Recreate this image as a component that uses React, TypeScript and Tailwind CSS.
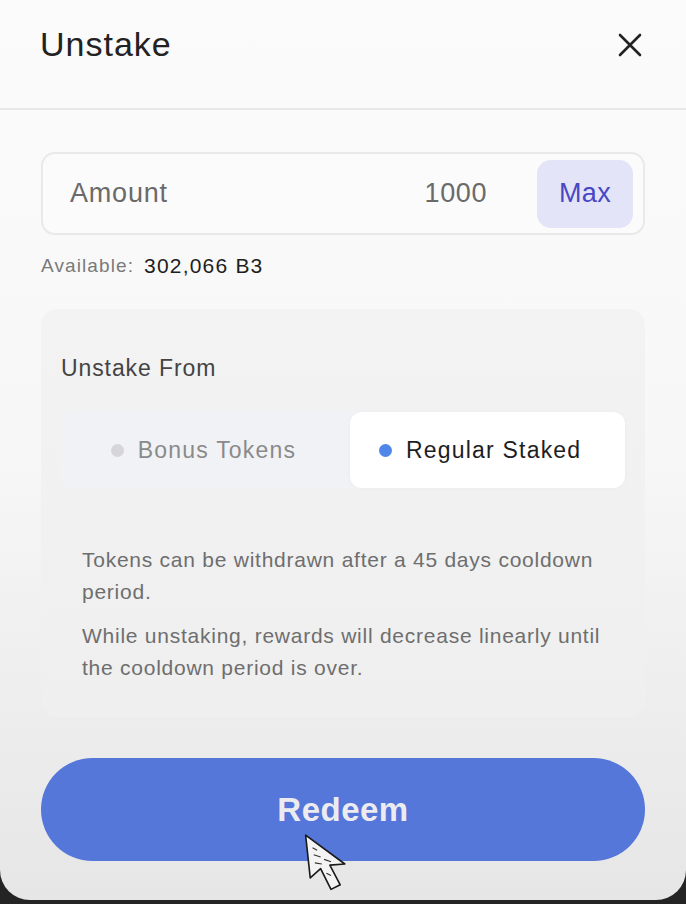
import React from "react";

const font = { fontFamily: '"Liberation Sans", Arial, sans-serif' };

const CloseIcon = () => (
  <svg width="24" height="24" viewBox="0 0 24 24" fill="none">
    <path d="M2 2L22 22M22 2L2 22" stroke="#222" strokeWidth="2.6" strokeLinecap="round" />
  </svg>
);

const Cursor = () => (
  <svg width="60" height="72" viewBox="0 0 52 56" className="absolute left-[301px] top-[828px]">
    <path
      d="M4 3 L8 40 L17 32 L26 50 L34 46 L25 29 L38 28 Z"
      fill="#f4f4f4"
      stroke="#1a1a1a"
      strokeWidth="1.4"
      strokeLinejoin="round"
    />
    <path d="M10 14 L14 16 M11 20 L17 22 M12 27 L18 28 M20 24 L26 26 M22 36 L26 38" stroke="#333" strokeWidth="1" />
  </svg>
);

export default function App() {
  return (
    <div className="w-[686px] h-[904px] bg-[#242424] overflow-hidden" style={font}>
      <div className="relative h-[900px] rounded-b-[30px] bg-gradient-to-b from-[#fbfbfb] via-[#f7f7f7] to-[#e6e6e6] flex flex-col">
        <div className="h-[110px] border-b-2 border-[#e8e8e8] flex items-start justify-between pl-[40px] pr-[44px] pt-[23px]">
          <h1 className="text-[34px] leading-[42px] text-[#222] tracking-[1px]">Unstake</h1>
          <div className="pt-[10px]">
            <CloseIcon />
          </div>
        </div>

        <div className="px-[41px] pt-[42px] flex flex-col">
          <div className="h-[83px] rounded-[14px] border-2 border-[#e9e9e9] bg-[#fbfbfb] flex items-center pl-[27px] pr-[10px]">
            <span className="text-[27px] text-[#6a6a6a] tracking-[0.8px] flex-1">Amount</span>
            <span className="text-[27px] text-[#6a6a6a] tracking-[0.6px] mr-[50px]">1000</span>
            <div className="w-[96px] h-[68px] rounded-[14px] bg-[#e4e4f8] flex items-center justify-center text-[27px] text-[#4848c4] tracking-[0.3px]">
              Max
            </div>
          </div>

          <div className="mt-[19px] h-[24px] flex items-center gap-[10px]">
            <span className="text-[19px] text-[#7a7a7a] tracking-[1.1px]">Available:</span>
            <span className="text-[21px] text-[#1e1e1e] tracking-[1.2px]">302,066 B3</span>
          </div>

          <div className="mt-[31px] h-[408px] rounded-[16px] bg-gradient-to-b from-[#f3f3f4] to-[#efefef] px-[20px] pt-[43px]">
            <p className="text-[23px] leading-[32px] text-[#444] tracking-[0.9px]">Unstake From</p>
            <div className="mt-[27px] h-[78px] rounded-[14px] bg-[#f1f2f5] flex items-center pl-[1px]">
              <div className="flex-1 flex items-center justify-center gap-[14px] -ml-[5px]">
                <span className="w-[13px] h-[13px] rounded-full bg-[#d6d6da]" />
                <span className="text-[23px] text-[#8a8a8a] tracking-[1.2px]">Bonus Tokens</span>
              </div>
              <div className="w-[275px] h-[76px] rounded-[12px] bg-white shadow-[0_0_4px_rgba(0,0,0,0.03)] flex items-center pl-[29px] gap-[14px]">
                <span className="w-[13px] h-[13px] rounded-full bg-[#4f86ea]" />
                <span className="text-[23px] text-[#1e1e1e] tracking-[1.2px]">Regular Staked</span>
              </div>
            </div>
            <div className="mt-[55px] px-[21px] text-[21px] leading-[32px] text-[#6e6e6e] tracking-[0.75px]">
              <p>Tokens can be withdrawn after a 45 days cooldown period.</p>
              <p className="mt-[12px]">While unstaking, rewards will decrease linearly until the cooldown period is over.</p>
            </div>
          </div>

          <button className="mt-[41px] h-[103px] rounded-full bg-[#5577da] flex items-center justify-center text-[33px] font-bold text-[#ececf0] tracking-[0.5px]">
            Redeem
          </button>
        </div>
        <Cursor />
      </div>
    </div>
  );
}
